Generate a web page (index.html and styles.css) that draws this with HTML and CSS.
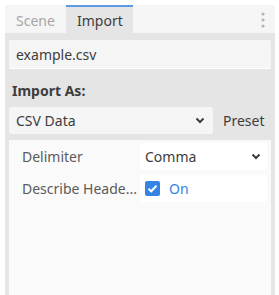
FILE: index.html
```html
<!DOCTYPE html>
<html lang="en">
<head>
    <meta charset="UTF-8">
    <title>Import Dock</title>
    <link rel="stylesheet" href="styles.css">
</head>
<body>
    <div class="dock">
        <!-- Tabs -->
        <div class="tab-bar">
            <div class="tab">Scene</div>
            <div class="tab active">Import</div>
            <div class="tab-menu">
                <svg width="4" height="16" viewBox="0 0 4 16">
                    <circle cx="2" cy="2" r="1.6" fill="#b4b4b4"/>
                    <circle cx="2" cy="8" r="1.6" fill="#b4b4b4"/>
                    <circle cx="2" cy="14" r="1.6" fill="#b4b4b4"/>
                </svg>
            </div>
        </div>

        <div class="panel">
            <div class="file-field">example.csv</div>
            <div class="section-label">Import As:</div>

            <div class="import-row">
                <div class="option-button">
                    <span>CSV Data</span>
                    <svg class="chevron" width="10" height="7" viewBox="0 0 10 7">
                        <path d="M1.5 1.5 L5 5 L8.5 1.5" fill="none" stroke="#3d3d3d" stroke-width="2"/>
                    </svg>
                </div>
                <div class="preset">Preset</div>
            </div>

            <!-- Inspector -->
            <div class="inspector">
                <div class="prop">
                    <div class="prop-name">Delimiter</div>
                    <div class="prop-value">
                        <span>Comma</span>
                        <svg class="chevron" width="10" height="7" viewBox="0 0 10 7">
                            <path d="M1.5 1.5 L5 5 L8.5 1.5" fill="none" stroke="#3d3d3d" stroke-width="2"/>
                        </svg>
                    </div>
                </div>
                <div class="prop">
                    <div class="prop-name">Describe Heade...</div>
                    <div class="prop-value check">
                        <svg width="15" height="15" viewBox="0 0 15 15">
                            <rect x="0" y="0" width="15" height="15" rx="2" fill="#3584e4"/>
                            <path d="M3.5 7.8 L6.2 10.3 L11.5 4.8" fill="none" stroke="#fff" stroke-width="2"/>
                        </svg>
                        <span class="on">On</span>
                    </div>
                </div>
            </div>
        </div>
    </div>
</body>
</html>
```

FILE: styles.css
```css
* {
    box-sizing: border-box;
    margin: 0;
    padding: 0;
}

body {
    font-family: 'Noto Sans', sans-serif;
    font-size: 14px;
    color: #3d3d3d;
    background-color: #fff;
    width: 279px;
    height: 295px;
    overflow: hidden;
}

.dock {
    margin: 5px 4px 0 5px;
    height: 290px;
    display: flex;
    flex-direction: column;
}

/* Tab bar */
.tab-bar {
    height: 28px;
    display: flex;
    align-items: stretch;
    background-color: #f5f5f5;
    border-top-right-radius: 3px;
}

.tab {
    padding: 0 11px;
    display: flex;
    align-items: center;
    color: #a6a6a6;
    border-top: 2px solid transparent;
}

.tab:first-child {
    width: 61px;
}

.tab.active {
    width: 67px;
    color: #3d3d3d;
    background-color: #e5e5e5;
    border-top-color: #5d9ae4;
}

.tab-menu {
    margin-left: auto;
    width: 14px;
    display: flex;
    align-items: center;
    padding-top: 2px;
}

/* Panel */
.panel {
    flex: 1;
    background-color: #e5e5e5;
    padding: 7px 4px 0 4px;
    display: flex;
    flex-direction: column;
}

.file-field {
    height: 29px;
    padding: 0 7px;
    display: flex;
    align-items: center;
    background-color: #f5f5f5;
    border-radius: 2px;
    border-bottom: 1px solid #fff;
}

.section-label {
    font-weight: bold;
    height: 38px;
    padding: 5px 3px 0;
    display: flex;
    align-items: center;
}

.import-row {
    display: flex;
    align-items: center;
    gap: 10px;
}

.option-button {
    width: 204px;
    height: 27px;
    padding: 0 7px;
    display: flex;
    align-items: center;
    justify-content: space-between;
    background-color: #f5f5f5;
    border-radius: 3px;
}

.chevron {
    margin-right: 1px;
}

.preset {
    color: #3d3d3d;
}

/* Inspector */
.inspector {
    flex: 1;
    margin-top: 6px;
    background-color: #fafafa;
    padding: 3px 4px 0 4px;
}

.prop {
    display: flex;
    align-items: center;
    margin-bottom: 5px;
}

.prop-name {
    width: 127px;
    padding-left: 9px;
    color: #5a5a5a;
    white-space: nowrap;
}

.prop-value {
    width: 127px;
    height: 27px;
    padding: 0 5px;
    display: flex;
    align-items: center;
    justify-content: space-between;
    background-color: #fff;
    border-radius: 3px;
}

.prop-value.check {
    justify-content: flex-start;
    gap: 9px;
}

.on {
    color: #3584e4;
}
```
